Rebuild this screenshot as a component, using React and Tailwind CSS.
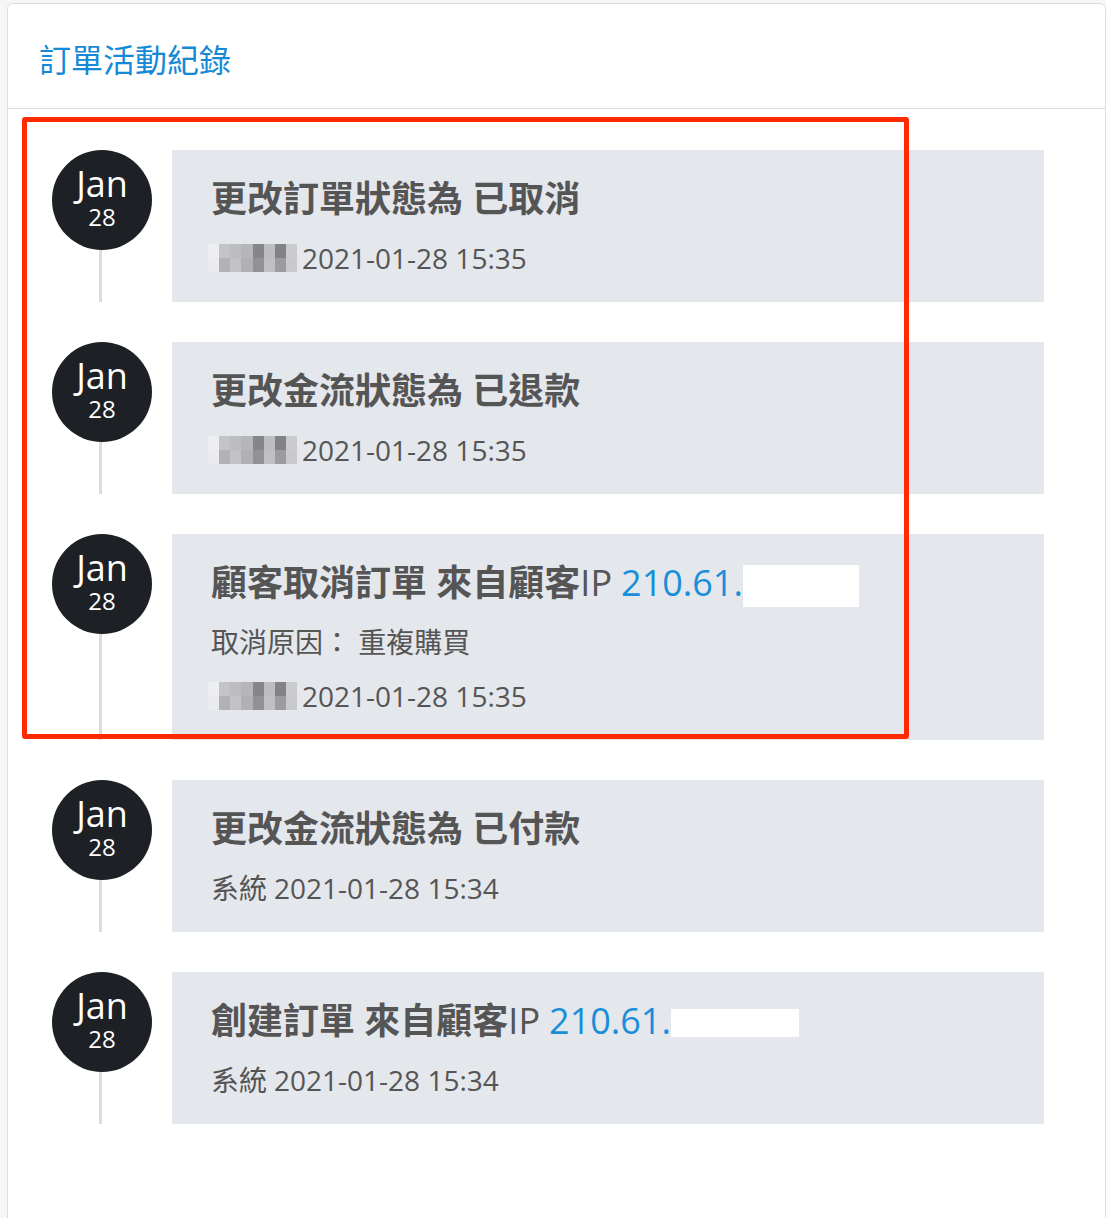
import React from "react";

const FONT = { fontFamily: "'Open Sans', 'Noto Sans CJK TC', sans-serif" };

// Pixelated name placeholder (blurred operator name)
const MOSAIC = [
  ["#eceef1", "#c4c4c6", "#bdbdbf", "#b6b6b8", "#868688", "#bebec0", "#838385", "#cbcbcd"],
  ["#e9ebee", "#b2b2b4", "#c3c3c5", "#b1b1b3", "#929294", "#c0c0c2", "#9c9c9e", "#c9c9cb"],
];

function Mosaic() {
  return (
    <span className="flex flex-col w-[89px] h-[28px] ml-[-3px] mr-[5px]">
      {MOSAIC.map((row, r) => (
        <span key={r} className="flex flex-1">
          {row.map((c, i) => (
            <span key={i} className="flex-1" style={{ backgroundColor: c }} />
          ))}
        </span>
      ))}
    </span>
  );
}

function DateBadge() {
  return (
    <div className="w-[100px] h-[100px] shrink-0 rounded-full bg-[#1d2024] text-white flex flex-col items-center justify-center">
      <span className="text-[36px] leading-[34px] mt-[-4px]">Jan</span>
      <span className="text-[24px] leading-[24px] mt-[4px]">28</span>
    </div>
  );
}

function Ip({ mask }) {
  return (
    <>
      <span className="font-normal">IP</span>
      <span className="font-normal text-[#1a8fd9] ml-[9px]">210.61.</span>
      <span className={`bg-white ${mask}`} />
    </>
  );
}

const ITEMS = [
  { title: <span>更改訂單狀態為 已取消</span>, by: "mosaic", time: "2021-01-28 15:35" },
  { title: <span>更改金流狀態為 已退款</span>, by: "mosaic", time: "2021-01-28 15:35" },
  {
    title: (
      <>
        <span>顧客取消訂單 來自顧客</span>
        <Ip mask="w-[116px] h-[42px] mt-[6px]" />
      </>
    ),
    note: "取消原因： 重複購買",
    by: "mosaic",
    time: "2021-01-28 15:35",
  },
  { title: <span>更改金流狀態為 已付款</span>, by: "系統", time: "2021-01-28 15:34" },
  {
    title: (
      <>
        <span>創建訂單 來自顧客</span>
        <Ip mask="w-[128px] h-[28px] mt-[4px]" />
      </>
    ),
    by: "系統",
    time: "2021-01-28 15:34",
  },
];

export default function App() {
  return (
    <div className="min-h-[1218px] bg-[#f6f6f6] pt-[3px] pl-[7px]" style={FONT}>
      <div className="relative w-[1099px] min-h-[1300px] bg-white border border-[#dedede] rounded-[6px]">
        <div className="h-[105px] border-b border-[#dedede] pl-[31px] pt-[32px]">
          <h2 className="text-[32px] leading-[48px] text-[#1589d6]">訂單活動紀錄</h2>
        </div>

        <div className="pt-[41px] pl-[44px]">
          {ITEMS.map((it, idx) => {
            const last = idx === ITEMS.length - 1;
            return (
              <div key={idx} className={`flex ${last ? "" : "pb-[40px]"}`}>
                <div className="w-[100px] shrink-0 flex flex-col">
                  <DateBadge />
                  <div className="flex-1 w-[3px] ml-[47px] bg-[#dcdcdc]" />
                </div>
                <div className="ml-[20px] w-[872px] bg-[#e4e7ec] pl-[39px] pt-[24px] pb-[24px] text-[#555555]">
                  <div className="h-[50px] flex items-center text-[36px] font-bold whitespace-nowrap">
                    {it.title}
                  </div>
                  {it.note && (
                    <div className="h-[40px] mt-[14px] flex items-center text-[28px]">{it.note}</div>
                  )}
                  <div className="h-[40px] mt-[14px] flex items-center text-[28px] whitespace-nowrap">
                    {it.by === "mosaic" ? <Mosaic /> : <span className="mr-[7px]">{it.by}</span>}
                    <span>{it.time}</span>
                  </div>
                </div>
              </div>
            );
          })}
        </div>

        {/* red highlight frame around the cancellation entries */}
        <div className="absolute left-[14px] top-[113px] w-[887px] h-[622px] border-[5px] border-[#ff2a00] rounded-[3px] pointer-events-none" />
      </div>
    </div>
  );
}
